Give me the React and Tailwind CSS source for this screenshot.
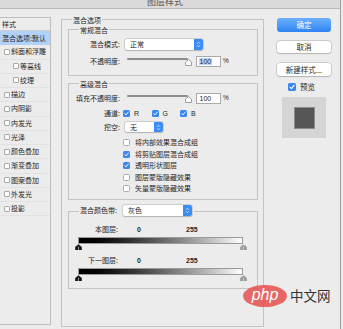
import React from 'react';

const EFFECTS = [
  { label: '斜面和浮雕' },
  { label: '等高线', indent: true },
  { label: '纹理', indent: true },
  { label: '描边' },
  { label: '内阴影' },
  { label: '内发光' },
  { label: '光泽' },
  { label: '颜色叠加' },
  { label: '渐变叠加' },
  { label: '图案叠加' },
  { label: '外发光' },
  { label: '投影' },
];

const ADVANCED = [
  { label: '将内部效果混合成组', on: false },
  { label: '将剪贴图层混合成组', on: true },
  { label: '透明形状图层', on: true },
  { label: '图层蒙版隐藏效果', on: false },
  { label: '矢量蒙版隐藏效果', on: false },
];

const num = "font-['Liberation_Sans',sans-serif]";

const Checkbox = ({ on, size = 'w-[7px] h-[7px]' }) =>
  on ? (
    <span className={`${size} shrink-0 rounded-[1.5px] bg-[#3b87f1]`}>
      <svg viewBox="0 0 8 8" className="block w-full h-full">
        <path d="M2 4.1 3.4 5.6 6.1 2.3" fill="none" stroke="#fff" strokeWidth="1.1" strokeLinecap="round" strokeLinejoin="round" />
      </svg>
    </span>
  ) : (
    <span className={`${size} shrink-0 rounded-[1.5px] bg-white border border-[#ababab]`} />
  );

const Select = ({ value, className = '' }) => (
  <div className={`flex shrink-0 rounded-[2px] bg-white shadow-[0_0_0_0.5px_#b5b5b5,0_0.5px_1px_rgba(0,0,0,0.25)] ${className}`}>
    <span className="flex-1 flex items-center pl-[5px]">{value}</span>
    <span className="w-[9px] flex items-center justify-center rounded-r-[2px] bg-[#3c8cf6]">
      <svg viewBox="0 0 6 8" className="w-[5px] h-[7px]">
        <path d="M1.3 3 3 1.3 4.7 3M1.3 5 3 6.7 4.7 5" fill="none" stroke="#fff" strokeWidth="0.9" />
      </svg>
    </span>
  </div>
);

const Slider = () => (
  <div className="w-[66px] h-[11px] flex flex-col shrink-0">
    <div className="mt-[2px] w-[61px] h-[2px] rounded-full bg-[#8d8d8d]" />
    <svg viewBox="0 0 7 7" className="-mt-[1px] ml-[57.5px] w-[7px] h-[7px]">
      <path d="M.5 6.5V3.2L3.5.6l3 2.6v3.3z" fill="#fff" stroke="#8a8a8a" strokeWidth=".8" />
    </svg>
  </div>
);

const NumberField = ({ selected }) => (
  <div className="flex items-center ml-[3px]">
    <div className={`w-[25px] h-[11px] flex items-center pl-[2px] bg-white border border-[#a9a9a9] ${num} text-[7px]`}>
      <span className={selected ? 'bg-[#b4d5fd] px-[0.5px]' : 'px-[0.5px]'}>100</span>
    </div>
    <span className={`ml-[2px] ${num} text-[6.5px]`}>%</span>
  </div>
);

const Row = ({ label, labelW = 'w-[51px]', className = '', children }) => (
  <div className={`flex items-center ${className}`}>
    <span className={`${labelW} shrink-0 text-right`}>{label}</span>
    {children}
  </div>
);

const Group = ({ legend, legendClass = '-mt-[4.5px] h-[8px] leading-[8px]', className = '', children }) => (
  <div className={`border border-[#c3c3c3] ${className}`}>
    <div className={`ml-[10px] w-fit px-[1px] bg-[#ececec] ${legendClass}`}>{legend}</div>
    {children}
  </div>
);

const Handle = ({ color }) => (
  <svg viewBox="0 0 7 6" className="w-[7px] h-[6px]">
    <path d="M3.5 .3 6.8 3v3H.2V3z" fill={color} />
    <path d="M3.5 2.6V6" stroke="#ececec" strokeWidth=".6" />
  </svg>
);

const BlendBar = ({ label }) => (
  <>
    <div className="flex items-center h-[8px]">
      <span className="w-[49px] shrink-0 text-right">{label}</span>
      <span className={`w-[68px] pl-[19px] ${num} font-bold`}>0</span>
      <span className={`${num} font-bold`}>255</span>
    </div>
    <div className="mt-[4px] ml-[9px] w-[165px] h-[7px] border border-[#9a9a9a] bg-linear-to-r from-black to-white" />
    <div className="ml-[5.5px] w-[172px] h-[6px] flex justify-between">
      <Handle color="#151515" />
      <Handle color="#9b9b9b" />
    </div>
  </>
);

const LeftPanel = () => (
  <div className="mt-[8px] w-[51px] h-[308px] shrink-0 border-t border-r border-b border-[#bdbdbd]">
    <div className="h-[13px] flex items-center pl-[2px] border-b border-[#d0d0d0]">样式</div>
    <div className="h-[14.25px] flex items-center pl-[2px] bg-[#b2d1f8]">混合选项:默认</div>
    {EFFECTS.map((e) => (
      <div
        key={e.label}
        className={`h-[14.25px] flex items-center gap-[1px] border-b border-[#e2e2e2] ${e.indent ? 'pl-[13px]' : 'pl-[4px]'}`}
      >
        <span className="w-[6px] h-[6px] shrink-0 bg-white border border-[#a9a9a9] rounded-[1px]" />
        <span>{e.label}</span>
      </div>
    ))}
  </div>
);

const MainBox = () => (
  <Group legend="混合选项" className="ml-[10px] mt-[10px] w-[203px] h-[308px] shrink-0">
    <div className="pl-[6px] pr-[5px]">
      {/* 常规混合 */}
      <Group legend="常规混合" className="mt-[5.5px] h-[47px]">
        <Row label="混合模式:" className="mt-[5.5px] h-[11px]">
          <Select value="正常" className="ml-[5px] w-[78px] h-[11px]" />
        </Row>
        <Row label="不透明度:" className="mt-[6px] h-[11px]">
          <span className="ml-[7px]" />
          <Slider />
          <NumberField selected />
        </Row>
      </Group>

      {/* 高级混合 */}
      <Group legend="高级混合" className="mt-[7px] h-[117px]">
        <Row label="填充不透明度:" className="mt-[5.5px] h-[11px]">
          <span className="ml-[7px]" />
          <Slider />
          <NumberField />
        </Row>
        <Row label="通道:" className="mt-[6px] h-[7px]">
          <div className={`ml-[3px] flex ${num}`}>
            {['R', 'G', 'B'].map((c) => (
              <div key={c} className="w-[28.5px] flex items-center gap-[4px]">
                <Checkbox on />
                <span>{c}</span>
              </div>
            ))}
          </div>
        </Row>
        <Row label="挖空:" className="mt-[5px] h-[10px]">
          <Select value="无" className="ml-[5px] w-[38px] h-[10px]" />
        </Row>
        <div className="mt-[5px] pl-[54px]">
          {ADVANCED.map((o) => (
            <div key={o.label} className="h-[11.5px] flex items-center gap-[5px]">
              <Checkbox on={o.on} />
              <span>{o.label}</span>
            </div>
          ))}
        </div>
      </Group>

      {/* 混合颜色带 */}
      <Group
        legend={
          <>
            <span>混合颜色带:</span>
            <Select value="灰色" className="ml-[6px] w-[69px] h-[11px]" />
          </>
        }
        legendClass="-mt-[7px] h-[11px] flex items-center pr-[2px]"
        className="mt-[11px] h-[78px]"
      >
        <div className="mt-[9px]">
          <BlendBar label="本图层:" />
        </div>
        <div className="mt-[6px]">
          <BlendBar label="下一图层:" />
        </div>
      </Group>
    </div>
  </Group>
);

const RightColumn = () => (
  <div className="ml-[13px] mt-[9px] w-[54px] shrink-0 flex flex-col text-[7.5px]">
    <div className="h-[14px] rounded-[3px] bg-linear-to-b from-[#6cb0fc] to-[#2e83f3] text-white flex items-center justify-center">
      确定
    </div>
    <div className="mt-[9px] h-[12px] rounded-[3px] bg-white shadow-[0_0_0_0.5px_#b0b0b0,0_0.5px_1px_rgba(0,0,0,0.2)] flex items-center justify-center">
      取消
    </div>
    <div className="mt-[10px] h-[13px] rounded-[3px] bg-white shadow-[0_0_0_0.5px_#b0b0b0,0_0.5px_1px_rgba(0,0,0,0.2)] flex items-center justify-center">
      新建样式...
    </div>
    <div className="mt-[7px] h-[8px] pl-[11px] flex items-center gap-[4px]">
      <Checkbox on size="w-[8px] h-[8px]" />
      <span>预览</span>
    </div>
    <div className="mt-[6px] ml-[5px] w-[44px] h-[41px] bg-[#d5d5d5] flex items-center justify-center">
      <div className="w-[21px] h-[22px] bg-[#555555] border border-[#8c8c8c]" />
    </div>
  </div>
);

export default function App() {
  return (
    <div className="relative w-[343px] h-[329px] overflow-hidden bg-[#ececec] font-['Noto_Sans_CJK_SC','Liberation_Sans',sans-serif] text-[7px] leading-none text-[#262626]">
      <div className="w-[341px] h-full border-r border-[#9c9c9c]">
        {/* title bar, top edge cropped as in the screenshot */}
        <div className="h-[9px] border-b border-[#b9b9b9] bg-[#dadada] overflow-hidden pl-[147px]">
          <div className="-mt-[3px] text-[9px] leading-[9px] text-[#555]">图层样式</div>
        </div>

        <div className="flex">
          <LeftPanel />
          <MainBox />
          <RightColumn />
        </div>
      </div>

      {/* watermark */}
      <div className="absolute left-[243px] top-[285px] flex items-center">
        <div className={`w-[44px] h-[22px] rounded-[50%] bg-[#e5504e]/85 flex items-center justify-center text-white italic text-[16px] ${num} pb-[2px]`}>
          php
        </div>
        <span className="ml-[3px] text-[13.5px] text-[#333]">中文网</span>
      </div>
    </div>
  );
}
